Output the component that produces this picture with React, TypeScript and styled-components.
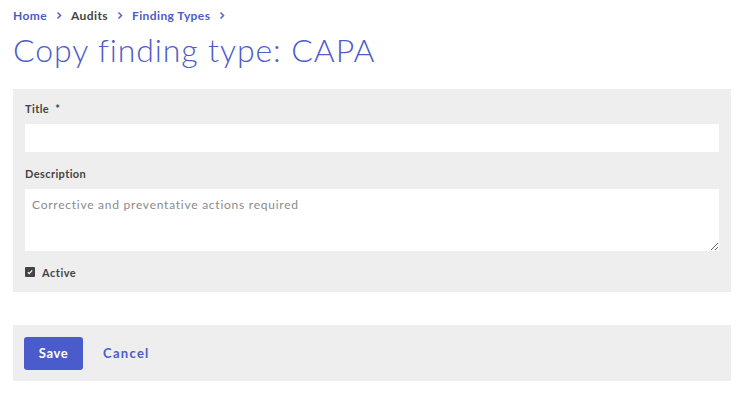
import React from 'react'
import styled, { createGlobalStyle } from 'styled-components'

const Global = createGlobalStyle`
  body {
    margin: 0;
    background: #fff;
    font-family: Lato, "Open Sans", sans-serif;
    color: #444;
  }
`

const Page = styled.main`
  padding: 7px 14px 0 13px;
`

const Crumbs = styled.nav`
  display: flex;
  align-items: center;
  gap: 8px;
  height: 16px;
  font-size: 12px;
  font-weight: 700;
  letter-spacing: 0.4px;
`

const Crumb = styled.a<{ $muted?: boolean }>`
  color: ${p => (p.$muted ? '#444' : '#4d5cc4')};
  text-decoration: none;
`

const Sep = styled.span`
  display: flex;
  color: #5a66c8;
`

const H1 = styled.h1`
  margin: 10px 0 22px;
  font-size: 32px;
  font-weight: 300;
  line-height: 34px;
  color: #4d5cc8;
  letter-spacing: 0.9px;
`

const Panel = styled.section`
  background: #eeeeee;
  padding: 12px 12px;
  display: flex;
  flex-direction: column;
`

const Label = styled.label<{ $gap?: number }>`
  display: block;
  font-size: 11px;
  font-weight: 700;
  line-height: 16px;
  letter-spacing: 0.4px;
  color: #444;
  margin: ${p => p.$gap ?? 0}px 0 7px;
`

const Input = styled.input`
  box-sizing: border-box;
  width: 100%;
  height: 28px;
  border: none;
  background: #fff;
  outline: none;
`

const TextArea = styled.textarea`
  box-sizing: border-box;
  width: 100%;
  height: 62px;
  border: none;
  background: #fff;
  padding: 8px 7px;
  font-family: Lato, "Open Sans", sans-serif;
  font-size: 12px;
  letter-spacing: 0.75px;
  color: #888;
  outline: none;
  display: block;
  &::placeholder {
    color: #8a8a8a;
  }
`

const CheckRow = styled.div`
  display: flex;
  align-items: center;
  gap: 7px;
  margin-top: 13px;
  height: 16px;
  font-size: 11px;
  font-weight: 700;
  letter-spacing: 0.5px;
`

const Box = styled.span`
  width: 10px;
  height: 10px;
  background: #444;
  border-radius: 1px;
  display: flex;
  align-items: center;
  justify-content: center;
`

const Actions = styled.section`
  margin-top: 33px;
  background: #eeeeee;
  padding: 11px 11px;
  display: flex;
  align-items: center;
  gap: 20px;
  height: 34px;
`

const SaveButton = styled.button`
  height: 33px;
  width: 59px;
  border: none;
  border-radius: 3px;
  background: #4a5bcc;
  color: #fff;
  font-family: Lato, "Open Sans", sans-serif;
  font-weight: 700;
  font-size: 13px;
  letter-spacing: 0.6px;
`

const Link = styled.a`
  color: #4d5cc4;
  font-weight: 700;
  font-size: 13px;
  letter-spacing: 1.3px;
`

const Chevron = () => (
  <Sep>
    <svg width="8" height="9" viewBox="0 0 8 9">
      <path d="M2.5 1.5 L5.5 4.5 L2.5 7.5" fill="none" stroke="currentColor" strokeWidth="1.6" />
    </svg>
  </Sep>
)

export default function App() {
  return (
    <>
      <Global />
      <Page>
        <Crumbs>
          <Crumb>Home</Crumb>
          <Chevron />
          <Crumb $muted>Audits</Crumb>
          <Chevron />
          <Crumb>Finding Types</Crumb>
          <Chevron />
        </Crumbs>
        <H1>Copy finding type: CAPA</H1>
        <Panel>
          <Label>Title &nbsp;*</Label>
          <Input />
          <Label $gap={14}>Description</Label>
          <TextArea placeholder="Corrective and preventative actions required" />
          <CheckRow>
            <Box>
              <svg width="8" height="8" viewBox="0 0 8 8">
                <path d="M1.8 4.2 L3.3 5.6 L6.2 2.4" fill="none" stroke="#fff" strokeWidth="1.2" />
              </svg>
            </Box>
            Active
          </CheckRow>
        </Panel>
        <Actions>
          <SaveButton>Save</SaveButton>
          <Link>Cancel</Link>
        </Actions>
      </Page>
    </>
  )
}
